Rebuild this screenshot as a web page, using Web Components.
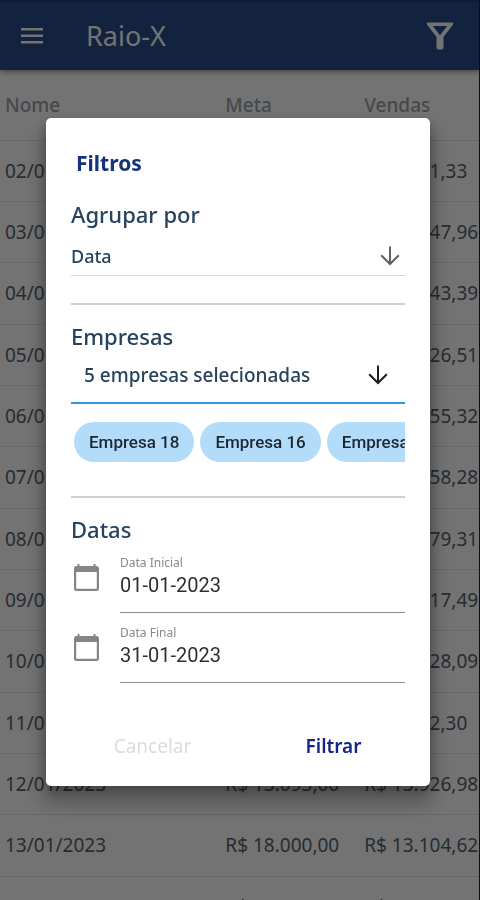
<!DOCTYPE html>
<html lang="pt-BR">
<head>
<meta charset="utf-8">
<meta name="viewport" content="width=device-width, initial-scale=1">
<title>Raio-X</title>
<style>
  html, body { margin: 0; height: 100%; }
  body { font-family: "Noto Sans", "Open Sans", sans-serif; background: #fff; overflow: hidden; }
</style>
</head>
<body>
<raio-app></raio-app>
<script>
const define = (name, html, setup) => {
  const template = document.createElement('template');
  template.innerHTML = html;
  customElements.define(name, class extends HTMLElement {
    constructor() {
      super();
      this.attachShadow({ mode: 'open' }).append(template.content.cloneNode(true));
    }
    connectedCallback() {
      if (setup && !this.ready) { this.ready = true; setup(this, this.shadowRoot); }
    }
  });
};

const ARROW = '<svg viewBox="0 0 20 20" width="20" height="20" fill="none" stroke="currentColor" stroke-width="2" aria-hidden="true"><path d="M10 0.5V18M1.2 9.2L10 18L18.8 9.2"/></svg>';

define('app-bar', `
<style>
  :host { display: block; position: relative; background: #2c4c8c; color: #fff; border-top: 2px solid #223c70;
          box-shadow: 0 2px 5px rgba(0,0,0,.4); }
  header { display: flex; align-items: center; height: 68px; padding: 0 24px 0 20px; box-sizing: border-box; }
  h1 { flex: 1; margin: 0 0 0 42px; font-size: 27px; line-height: 32px; font-weight: 400; }
  button { all: unset; display: flex; }
</style>
<header>
  <button aria-label="Menu"><svg width="24" height="18" viewBox="0 0 24 18" fill="#fff" aria-hidden="true"><path d="M1 1h22v2.400H1zM1 7.500h22v2.400H1zM1 14h22v2.400H1z"/></svg></button>
  <h1><slot></slot></h1>
  <button aria-label="Filtrar"><svg width="30" height="30" viewBox="0 0 30 30" fill="#fff" aria-hidden="true"><path fill-rule="evenodd" d="M3 1.500H27Q29 1.700 28 3.500L18.500 16V26.500Q18.500 28.500 16.500 28.500H13.500Q11.500 28.500 11.500 26.500V16L2 3.500Q1 1.700 3 1.500ZM7.800 5L15 14.300L22.200 5Z"/></svg></button>
</header>`);

define('sales-table', `
<style>
  :host { display: block; color: #57636f; }
  table { width: 100%; border-collapse: collapse; table-layout: fixed; font-size: 19px; line-height: 26px; }
  col.nome { width: 46%; } col.meta { width: 29%; }
  th, td { padding: 0 0 0 5px; text-align: left; font-weight: 400; white-space: nowrap; border-bottom: 1px solid #e6e6e6; }
  th { height: 70px; font-weight: 500; color: #9aa0a8; box-sizing: border-box; }
  tbody tr { height: 61px; }
  tbody tr:nth-child(3n) { height: 62px; }
</style>
<table>
  <colgroup><col class="nome"><col class="meta"><col></colgroup>
  <thead><tr><th>Nome</th><th>Meta</th><th>Vendas</th></tr></thead>
  <tbody></tbody>
</table>`, (host, root) => {
  const rows = [
    ['02/01/2023', 'R$ 9.000,00', 'R$ 8.041,33'], ['03/01/2023', 'R$ 13.000,00', 'R$ 12.547,96'],
    ['04/01/2023', 'R$ 13.000,00', 'R$ 12.243,39'], ['05/01/2023', 'R$ 13.000,00', 'R$ 13.426,51'],
    ['06/01/2023', 'R$ 14.000,00', 'R$ 13.855,32'], ['07/01/2023', 'R$ 18.000,00', 'R$ 17.658,28'],
    ['08/01/2023', 'R$ 12.000,00', 'R$ 11.979,31'], ['09/01/2023', 'R$ 13.000,00', 'R$ 12.517,49'],
    ['10/01/2023', 'R$ 13.000,00', 'R$ 12.828,09'], ['11/01/2023', 'R$ 9.000,00', 'R$ 8.312,30'],
    ['12/01/2023', 'R$ 13.093,00', 'R$ 13.926,98'], ['13/01/2023', 'R$ 18.000,00', 'R$ 13.104,62'],
    ['14/01/2023', 'R$ 18.000,00', 'R$ 16.204,10'],
  ];
  const body = root.querySelector('tbody');
  for (const row of rows) {
    const tr = body.insertRow();
    for (const text of row) tr.insertCell().textContent = text;
  }
});

define('filter-section', `
<style>
  :host { display: block; }
  h3 { margin: 0; font-size: 22px; line-height: 28px; font-weight: 500; color: #26425c; }
</style>
<section><h3></h3><slot></slot></section>`, (host, root) => {
  root.querySelector('h3').textContent = host.getAttribute('heading');
});

define('group-select', `
<style>
  :host { display: block; border-bottom: 1px solid #d4d8da; }
  label { display: grid; align-items: center; height: 47px; padding-top: 9px; box-sizing: border-box; }
  select { grid-area: 1/1; appearance: none; border: 0; background: none; padding: 0; margin: 0; font: 500 18px/24px "Noto Sans", sans-serif; color: #26425c; outline: 0; }
  svg { grid-area: 1/1; justify-self: end; margin-right: 5px; color: #616161; pointer-events: none; }
</style>
<label><select aria-label="Agrupar por"><option>Data</option></select>${ARROW}</label>`);

define('company-picker', `
<style>
  :host { display: block; }
  button { all: unset; box-sizing: border-box; display: flex; justify-content: space-between; align-items: center; width: 100%; height: 54px;
           padding: 0 17px 2px 13px; border-bottom: 2px solid #2d96e0; font-size: 19px; line-height: 24px; font-weight: 500; color: #26425c; }
  svg { color: #1c1c1c; }
  div { display: flex; gap: 6px; padding: 18px 0 0 3px; overflow: hidden; }
</style>
<button aria-haspopup="listbox"><span>5 empresas selecionadas</span>${ARROW}</button>
<div><slot></slot></div>`);

define('company-chip', `
<style>
  :host { flex: none; padding: 8px 15px; border-radius: 20px; background: #b3dbfa; color: #1d2730;
          font: 500 17px/24px Roboto, sans-serif; white-space: nowrap; }
</style>
<slot></slot>`);

define('date-field', `
<style>
  :host { display: flex; align-items: flex-start; gap: 20px; }
  svg { flex: none; margin: 8px 0 0 2px; }
  .box { flex: 1; min-width: 0; border-bottom: 1px solid #8c8c8c; padding-bottom: 13px; }
  label { display: block; font-size: 12px; line-height: 16px; color: #84898e; }
  input { display: block; width: 100%; box-sizing: border-box; border: 0; padding: 0; margin: 0; background: none; outline: 0;
          font: 400 20px/28px Roboto, sans-serif; height: 28px; color: #303030; }
</style>
<svg width="27" height="30" viewBox="0 0 27 30" aria-hidden="true"><path fill="#858585" fill-rule="evenodd" d="M4.500 1h2v2h14V1h2v2h1A2.500 2.500 0 0 1 26 5.500v20a2.500 2.500 0 0 1-2.500 2.500h-20A2.500 2.500 0 0 1 1 25.500v-20A2.500 2.500 0 0 1 3.500 3H4.500zM3.200 9v16.200q0 .6.600.6h19.400q.6 0 .6-.6V9z"/></svg>
<div class="box"><label for="d"></label><input id="d" type="text"></div>`, (host, root) => {
  root.querySelector('label').textContent = host.getAttribute('label');
  root.querySelector('input').value = host.getAttribute('value');
});

define('filter-dialog', `
<style>
  :host { position: fixed; inset: 0; display: flex; align-items: center; padding: 4px 50px 0 46px; background: rgba(0,0,0,.55); }
  [role=dialog] { flex: 1; min-width: 0; box-sizing: border-box; padding: 30px 25px 25px; background: #fff; border-radius: 5px;
       box-shadow: 0 14px 19px 4px rgba(0,0,0,.26), 0 4px 12px rgba(0,0,0,.24); }
  h2 { margin: 0 0 22px 5px; font-size: 21px; line-height: 30px; font-weight: 700; color: #16317d; }
  hr { margin: 0; border: 0; border-top: 2px solid #ced0d1; }
  .first { margin: 27px 0 17px; }
  .second { margin: 34px 0 17px; }
  .dates { display: grid; gap: 12px; padding-top: 12px; }
  footer { display: grid; grid-template-columns: 163px 1fr; column-gap: 28px; justify-items: center; margin-top: 48px; }
  button { all: unset; font-size: 19px; line-height: 30px; color: #d9dcde; }
  button.go { color: #14248a; font-weight: 600; }
</style>
<div role="dialog" aria-modal="true" aria-labelledby="t">
  <h2 id="t">Filtros</h2>
  <filter-section heading="Agrupar por"><group-select></group-select></filter-section>
  <hr class="first">
  <filter-section heading="Empresas">
    <company-picker>
      <company-chip>Empresa 18</company-chip><company-chip>Empresa 16</company-chip><company-chip>Empresa 15</company-chip>
    </company-picker>
  </filter-section>
  <hr class="second">
  <filter-section heading="Datas">
    <div class="dates">
      <date-field label="Data Inicial" value="01-01-2023"></date-field>
      <date-field label="Data Final" value="31-01-2023"></date-field>
    </div>
  </filter-section>
  <footer><button>Cancelar</button><button class="go">Filtrar</button></footer>
</div>`);

define('raio-app', `
<style>
  :host { display: block; height: 100vh; overflow: hidden; box-sizing: border-box; border-right: 1px solid #222; }
</style>
<app-bar>Raio-X</app-bar>
<sales-table></sales-table>
<filter-dialog></filter-dialog>`);
</script>
</body>
</html>
